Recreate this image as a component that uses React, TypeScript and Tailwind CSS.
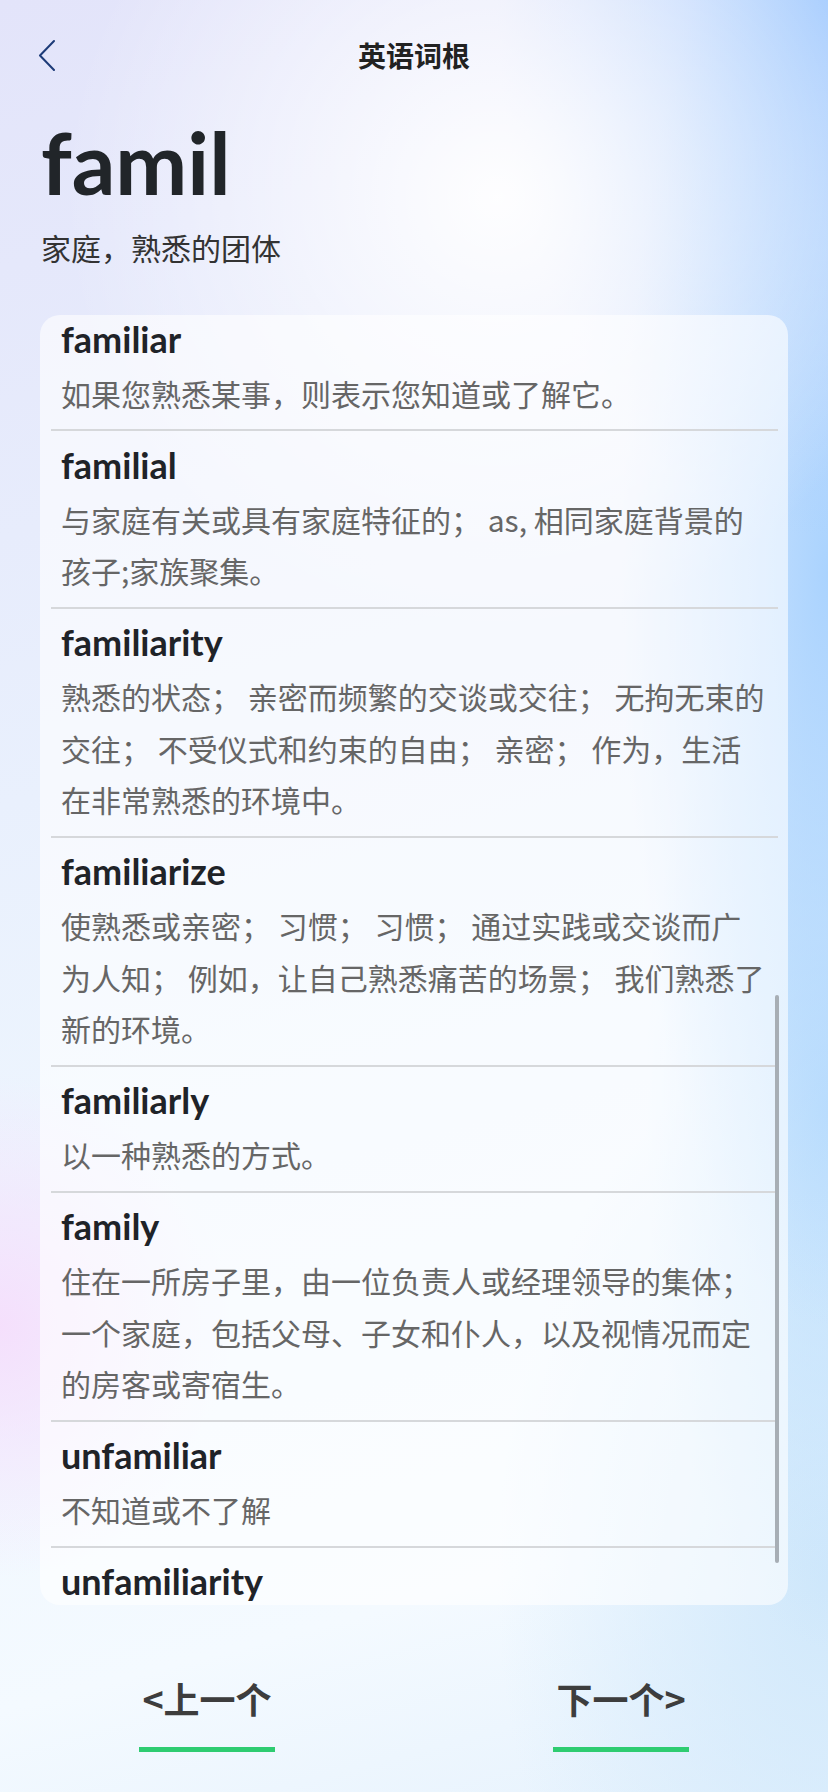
import React from "react";

type Entry = { word: string; lines: string[] };

const entries: Entry[] = [
  { word: "familiar", lines: ["如果您熟悉某事，则表示您知道或了解它。"] },
  {
    word: "familial",
    lines: ["与家庭有关或具有家庭特征的； as, 相同家庭背景的", "孩子;家族聚集。"],
  },
  {
    word: "familiarity",
    lines: [
      "熟悉的状态； 亲密而频繁的交谈或交往； 无拘无束的",
      "交往； 不受仪式和约束的自由； 亲密； 作为，生活",
      "在非常熟悉的环境中。",
    ],
  },
  {
    word: "familiarize",
    lines: [
      "使熟悉或亲密； 习惯； 习惯； 通过实践或交谈而广",
      "为人知； 例如，让自己熟悉痛苦的场景； 我们熟悉了",
      "新的环境。",
    ],
  },
  { word: "familiarly", lines: ["以一种熟悉的方式。"] },
  {
    word: "family",
    lines: [
      "住在一所房子里，由一位负责人或经理领导的集体；",
      "一个家庭，包括父母、子女和仆人，以及视情况而定",
      "的房客或寄宿生。",
    ],
  },
  { word: "unfamiliar", lines: ["不知道或不了解"] },
  { word: "unfamiliarity", lines: [] },
];

export default function App() {
  return (
    <div className="relative w-[828px] h-[1792px] overflow-hidden font-['Noto_Sans_CJK_SC',sans-serif] bg-[radial-gradient(circle_at_60%_11%,rgba(255,255,255,0.95)_0,rgba(255,255,255,0)_26%),radial-gradient(ellipse_28%_14%_at_0%_74%,rgba(245,222,252,0.95),rgba(245,222,252,0)),radial-gradient(ellipse_40%_30%_at_100%_0%,#a2cafe,rgba(162,202,254,0)),radial-gradient(ellipse_25%_42%_at_100%_32%,#aad3fe,rgba(170,211,254,0)),radial-gradient(ellipse_22%_30%_at_100%_62%,#bfe0fd,rgba(191,224,253,0)),radial-gradient(ellipse_40%_30%_at_100%_88%,#d0e8fb,rgba(208,232,251,0)),linear-gradient(165deg,#e3e4fa_0%,#e9f0fd_40%,#eef6fe_62%,#f4faff_85%,#e6f2fd_100%)]">
      {/* Header */}
      <div className="grid grid-cols-[1fr_auto_1fr] items-center h-[110px]">
        <div className="pl-[38px] flex items-center">
          <svg width="18" height="32" viewBox="0 0 18 32" fill="none">
            <polyline
              points="16,2 2,16.5 16,31"
              stroke="#1d3b78"
              strokeWidth="2"
              strokeLinecap="round"
              strokeLinejoin="round"
            />
          </svg>
        </div>
        <div className="text-[28px] font-bold text-[#222] leading-none">英语词根</div>
        <div />
      </div>

      {/* Root word */}
      <div className="px-[41px] mt-[9px]">
        <div className="font-['Lato',sans-serif] font-bold text-[86px] leading-none text-[#212529] h-[86px]">
          famil
        </div>
        <div className="mt-[20px] text-[30px] leading-[45px] text-[#333]">家庭，熟悉的团体</div>
      </div>

      {/* Card */}
      <div className="relative mx-[40px] mt-[45px] h-[1290px] rounded-[20px] bg-white/60 overflow-hidden">
        <div className="-mt-[10px] pl-[11px] pr-[10px]">
          {entries.map((e, i) => (
            <div
              key={e.word}
              className={
                i < entries.length - 1
                  ? "pt-[4.5px] pb-[10px] pl-[10px] border-b-2 border-[#d6d8db]"
                  : "pt-[4.5px] pl-[10px]"
              }
            >
              <div className="font-['Lato',sans-serif] font-bold text-[36px] leading-[58px] text-[#1f2328] whitespace-nowrap">
                {e.word}
              </div>
              {e.lines.length > 0 && (
                <div className="text-[30px] leading-[51.5px] text-[#666]">
                  {e.lines.map((l, j) => (
                    <div key={j} className="whitespace-nowrap">
                      {l}
                    </div>
                  ))}
                </div>
              )}
            </div>
          ))}
        </div>
        {/* scrollbar */}
        <div className="absolute right-[9px] top-[680px] w-[4px] h-[568px] rounded-full bg-[#a7aeb5]" />
      </div>

      {/* Bottom nav */}
      <div className="flex mt-[66px]">
        <div className="w-1/2 flex flex-col items-center">
          <div className="text-[36px] font-bold leading-[54px] text-[#3d3d3d]">&lt;上一个</div>
          <div className="mt-[22px] w-[136px] h-[5px] bg-[#2ecc71]" />
        </div>
        <div className="w-1/2 flex flex-col items-center">
          <div className="text-[36px] font-bold leading-[54px] text-[#3d3d3d]">下一个&gt;</div>
          <div className="mt-[22px] w-[136px] h-[5px] bg-[#2ecc71]" />
        </div>
      </div>
    </div>
  );
}
